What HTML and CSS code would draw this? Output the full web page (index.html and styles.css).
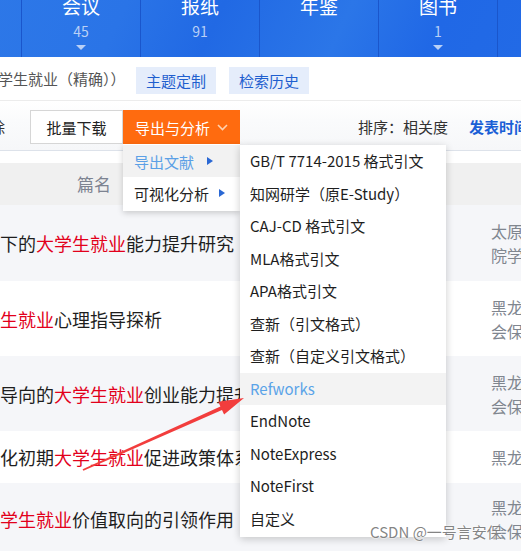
FILE: index.html
```html
<!DOCTYPE html>
<html lang="zh-CN">
<head>
  <meta charset="UTF-8">
  <meta name="viewport" content="width=device-width, initial-scale=1.0">
  <title>检索结果</title>
  <link rel="stylesheet" href="styles.css">
</head>
<body>
  <div class="page">

    <div class="nav">
      <div class="nav-item">
        <span class="nav-label">学术期刊</span>
        <span class="nav-count">&nbsp;</span>
      </div>
      <div class="nav-item">
        <span class="nav-label">会议</span>
        <span class="nav-count">45</span>
        <span class="nav-caret"></span>
      </div>
      <div class="nav-item">
        <span class="nav-label">报纸</span>
        <span class="nav-count">91</span>
      </div>
      <div class="nav-item">
        <span class="nav-label">年鉴</span>
        <span class="nav-count">&nbsp;</span>
      </div>
      <div class="nav-item">
        <span class="nav-label">图书</span>
        <span class="nav-count">1</span>
        <span class="nav-caret"></span>
      </div>
      <div class="nav-item">
        <span class="nav-label">专利</span>
      </div>
    </div>

    <div class="filter">
      <span class="filter-text">大学生就业（精确））</span>
      <a class="tag-btn">主题定制</a>
      <a class="tag-btn">检索历史</a>
    </div>

    <div class="toolbar">
      <span class="tool-text">删除</span>
      <button class="btn">批量下载</button>
      <button class="btn btn-orange">导出与分析
        <svg class="caret" width="11" height="7" viewBox="0 0 11 7"><polyline points="1,1 5.5,5.5 10,1" fill="none" stroke="#ffd2b0" stroke-width="1.6"/></svg>
      </button>
      <span class="sort">排序：相关度</span>
      <span class="sort-active">发表时间</span>
    </div>

    <div class="table">
      <div class="table-head">篇名</div>
      <div class="row row-gray h76">
        <div class="title">下的<em>大学生就业</em>能力提升研究</div>
        <div class="source">太原<br>院学</div>
      </div>
      <div class="row h75">
        <div class="title"><em>生就业</em>心理指导探析</div>
        <div class="source">黑龙<br>会保</div>
      </div>
      <div class="row row-gray h75">
        <div class="title">导向的<em>大学生就业</em>创业能力提升路径</div>
        <div class="source">黑龙<br>会保</div>
      </div>
      <div class="row h52">
        <div class="title">化初期<em>大学生就业</em>促进政策体系</div>
        <div class="source">黑龙</div>
      </div>
      <div class="row row-gray h72">
        <div class="title"><em>学生就业</em>价值取向的引领作用</div>
        <div class="source">黑龙<br>会保</div>
      </div>
    </div>

    <div class="menu">
      <div class="menu-item active">导出文献<span class="arrow"></span></div>
      <div class="menu-item">可视化分析<span class="arrow"></span></div>
    </div>

    <div class="submenu">
      <div class="sub-item">GB/T 7714-2015 格式引文</div>
      <div class="sub-item">知网研学（原E-Study）</div>
      <div class="sub-item">CAJ-CD 格式引文</div>
      <div class="sub-item">MLA格式引文</div>
      <div class="sub-item">APA格式引文</div>
      <div class="sub-item">查新（引文格式）</div>
      <div class="sub-item">查新（自定义引文格式）</div>
      <div class="sub-item hover">Refworks</div>
      <div class="sub-item">EndNote</div>
      <div class="sub-item">NoteExpress</div>
      <div class="sub-item">NoteFirst</div>
      <div class="sub-item">自定义</div>
    </div>

    <svg class="pointer" width="521" height="551" viewBox="0 0 521 551">
      <polygon fill="#f23d3d" points="82.6,469.3 220.4,406.4 218.3,401.8 244,398 224.1,414.6 222,410 83.4,470.7"/>
    </svg>

    <div class="watermark">CSDN @一号言安保</div>
  </div>
</body>
</html>
```

FILE: styles.css
```css
body, html {
  margin: 0;
  padding: 0;
  overflow: hidden;
}

.page {
  position: relative;
  width: 521px;
  height: 551px;
  overflow: hidden;
  font-family: "Noto Sans CJK SC", "Noto Sans", sans-serif;
  color: #222;
  background: #fff;
}

/* top category bar */
.nav {
  display: flex;
  height: 57px;
  margin-left: -97px;
  background: linear-gradient(115deg, #2f7ae8 0%, #2a74e7 35%, #2169e4 50%, #2b76e8 70%, #2068e6 85%, #226ae6 100%);
}

.nav-item {
  flex: none;
  width: 118px;
  border-right: 1px solid #1a56cc;
  display: flex;
  flex-direction: column;
  align-items: center;
  color: #fff;
}

.nav-label {
  font-size: 19px;
  line-height: 22px;
  margin-top: -5px;
  white-space: nowrap;
}

.nav-count {
  font-size: 14px;
  line-height: 18px;
  margin-top: 5px;
  color: #b9d0f6;
}

.nav-caret {
  margin-top: 5px;
  width: 0;
  height: 0;
  border-left: 5px solid transparent;
  border-right: 5px solid transparent;
  border-top: 5px solid #b9d0f6;
}

/* filter line */
.filter {
  display: flex;
  align-items: center;
  gap: 13px;
  height: 43px;
  white-space: nowrap;
}

.filter-text {
  flex: none;
  width: 140px;
  margin-left: -17px;
  font-size: 15px;
  color: #555;
}

.tag-btn {
  flex: none;
  width: 80px;
  height: 27px;
  line-height: 27px;
  text-align: center;
  font-size: 15px;
  color: #1f5fcf;
  background: #e5edfb;
  margin-top: 4px;
}

/* toolbar */
.toolbar {
  display: flex;
  align-items: flex-start;
  padding-top: 9px;
  box-sizing: border-box;
  height: 51px;
  border-top: 1px solid #ececec;
  border-bottom: 1px solid #dde2ea;
  background: linear-gradient(#fff 0, #fafbfc 40%, #f6f7f9 100%);
  white-space: nowrap;
  font-size: 15px;
}

.tool-text {
  flex: none;
  margin-left: -25px;
  width: 55px;
  line-height: 34px;
  color: #333;
}

.btn {
  flex: none;
  height: 34px;
  width: 93px;
  border: 1px solid #d6d6d6;
  background: #fff;
  font-family: inherit;
  font-size: 15px;
  color: #222;
  padding: 0;
}

.btn-orange {
  width: 117px;
  background: #ff6b0f;
  border-color: #ff6b0f;
  color: #fff;
  display: flex;
  align-items: center;
  padding-left: 11px;
  gap: 7px;
}

.caret {
  margin-top: 1px;
}

.sort {
  flex: none;
  margin-left: 118px;
  line-height: 34px;
  color: #333;
}

.sort-active {
  flex: none;
  margin-left: 21px;
  line-height: 34px;
  color: #1b5fd6;
  font-weight: bold;
}

/* result table */
.table {
  margin-top: 12px;
}

.table-head {
  height: 42px;
  line-height: 42px;
  padding-left: 77px;
  background: #f0f0f0;
  font-size: 17px;
  color: #7d8391;
}

.row {
  display: flex;
  align-items: center;
  background: #fff;
}

.row-gray {
  background: #f5f6f9;
}

.h76 { height: 76px; }
.h75 { height: 75px; }
.h52 { height: 52px; }
.h72 { height: 72px; }

.title {
  flex: none;
  width: 491px;
  overflow: hidden;
  white-space: nowrap;
  font-size: 18px;
  color: #1e1e1e;
}

.title em {
  font-style: normal;
  color: #e2001b;
}

.source {
  flex: none;
  font-size: 16px;
  line-height: 24px;
  color: #80868f;
  white-space: nowrap;
}

/* dropdown menus */
.menu {
  position: absolute;
  left: 123px;
  top: 144px;
  width: 117px;
  padding: 1px 0 2px;
  background: #fff;
  box-shadow: 0 2px 6px rgba(0, 0, 0, 0.18);
  z-index: 2;
}

.menu-item {
  display: flex;
  align-items: center;
  height: 32px;
  padding-left: 11px;
  font-size: 15px;
  color: #222;
}

.menu-item.active {
  background: #f2f2f2;
  color: #5ba0e6;
}

.arrow {
  margin-left: 10px;
  width: 0;
  height: 0;
  border-top: 4px solid transparent;
  border-bottom: 4px solid transparent;
  border-left: 6px solid #2a68d4;
}

.menu-item.active .arrow {
  margin-left: 13px;
}

.submenu {
  position: absolute;
  left: 240px;
  top: 145px;
  width: 206px;
  padding-bottom: 2px;
  background: #fff;
  box-shadow: 0 2px 8px rgba(0, 0, 0, 0.2);
  z-index: 2;
}

.sub-item {
  height: 32.5px;
  line-height: 32.5px;
  padding-left: 10px;
  font-size: 15px;
  color: #1e1e1e;
  white-space: nowrap;
}

.sub-item.hover {
  background: #f3f3f3;
  color: #5aa3e8;
}

/* annotation */
.pointer {
  position: absolute;
  left: 0;
  top: 0;
  z-index: 3;
}

.watermark {
  position: absolute;
  left: 370px;
  top: 521px;
  font-size: 15px;
  white-space: nowrap;
  color: rgba(110, 110, 110, 0.85);
  text-shadow: 0 0 2px #fff, 0 0 2px #fff;
  z-index: 4;
}
```
